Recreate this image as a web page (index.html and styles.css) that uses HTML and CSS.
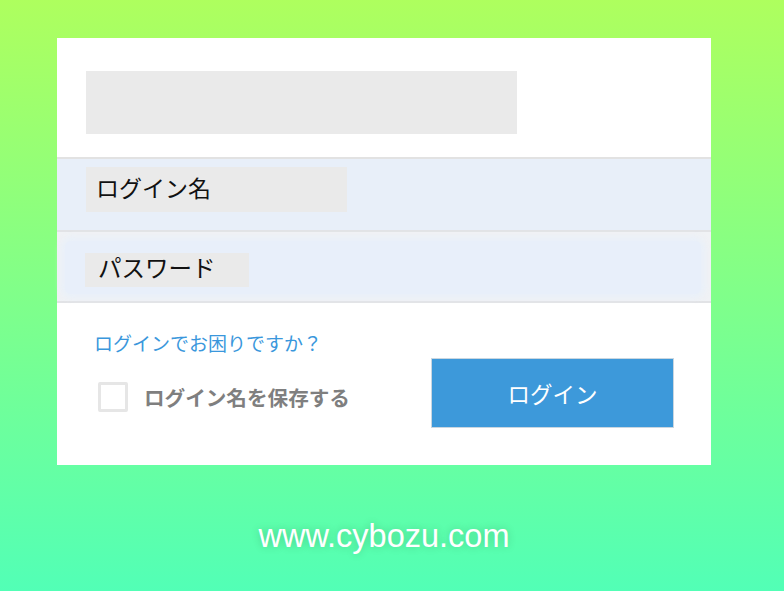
FILE: index.html
```html
<!DOCTYPE html>
<html lang="ja">

<head>
    <meta charset="UTF-8">
    <meta name="viewport" content="width=device-width, initial-scale=1.0">
    <title>cybozu.com ログイン</title>
    <link rel="stylesheet" href="styles.css">
</head>

<body>
    <div class="login-card">
        <div class="card-header">
            <div class="logo-box"></div>
        </div>

        <div class="field-row name-row">
            <div class="field-label name-label">ログイン名</div>
        </div>

        <div class="field-row pass-row">
            <div class="pass-input">
                <div class="field-label pass-label">パスワード</div>
            </div>
        </div>

        <div class="card-footer">
            <a class="help-link" href="#">ログインでお困りですか？</a>
            <div class="action-row">
                <label class="remember">
                    <span class="check-box"></span>
                    <span class="remember-text">ログイン名を保存する</span>
                </label>
                <button class="login-button">ログイン</button>
            </div>
        </div>
    </div>

    <div class="site-url">www.cybozu.com</div>
</body>

</html>
```

FILE: styles.css
```css
body {
    margin: 0;
    height: 591px;
    font-family: "Noto Sans CJK JP", "Noto Sans", sans-serif;
    background: linear-gradient(to bottom, #aeff5e 0%, #52ffb6 100%);
    overflow: hidden;
}

.login-card {
    width: 654px;
    margin: 38px 0 0 57px;
    background-color: #ffffff;
}

/* top area with logo placeholder */
.card-header {
    height: 121px;
    padding: 33px 0 0 29px;
    box-sizing: border-box;
    border-bottom: 2px solid #e2e2e2;
}

.logo-box {
    width: 431px;
    height: 63px;
    background-color: #eaeaea;
}

.field-row {
    border-bottom: 2px solid #e2e3e6;
    box-sizing: border-box;
}

.name-row {
    height: 73px;
    padding: 8px 0 0 29px;
    background-color: #e8eff9;
}

.field-label {
    background-color: #eaeaea;
    color: #111111;
    box-sizing: border-box;
}

.name-label {
    width: 261px;
    height: 45px;
    line-height: 40px;
    padding-left: 10px;
    font-size: 23px;
}

.pass-row {
    height: 71px;
    padding: 9px 10px 7px 8px;
    background-color: #f0f2f5;
}

.pass-input {
    height: 100%;
    padding: 12px 0 0 20px;
    box-sizing: border-box;
    background-color: #e8effa;
    border-radius: 6px;
    box-shadow: 0 0 6px 4px rgba(232, 239, 250, 0.9);
}

.pass-label {
    width: 164px;
    height: 34px;
    line-height: 29px;
    padding-left: 13px;
    font-size: 23.5px;
}

.card-footer {
    padding: 28px 37px 37px 37px;
}

.help-link {
    display: block;
    color: #3a97dc;
    font-size: 19px;
    line-height: 24px;
    text-decoration: none;
}

.action-row {
    display: flex;
    justify-content: space-between;
    align-items: center;
    margin-top: 3px;
}

.remember {
    display: flex;
    align-items: center;
    margin-left: 4px;
    margin-top: 8px;
}

.check-box {
    width: 30px;
    height: 30px;
    box-sizing: border-box;
    border: 3px solid #e6e6e6;
    border-radius: 2px;
    background-color: #ffffff;
}

.remember-text {
    margin-left: 16px;
    color: #7f7f7f;
    font-size: 20.6px;
    font-weight: bold;
}

.login-button {
    width: 243px;
    height: 70px;
    border: 1px solid #c9d6e0;
    background-color: #3d99da;
    color: #ffffff;
    font-family: "Noto Sans CJK JP", "Noto Sans", sans-serif;
    font-size: 22.5px;
    cursor: pointer;
}

.site-url {
    width: 654px;
    margin: 51px 0 0 57px;
    text-align: center;
    color: #ffffff;
    font-family: "Liberation Sans", Arial, sans-serif;
    font-size: 32.5px;
    line-height: 40px;
    text-shadow: 0 0 8px rgba(0, 0, 0, 0.2);
}
```
